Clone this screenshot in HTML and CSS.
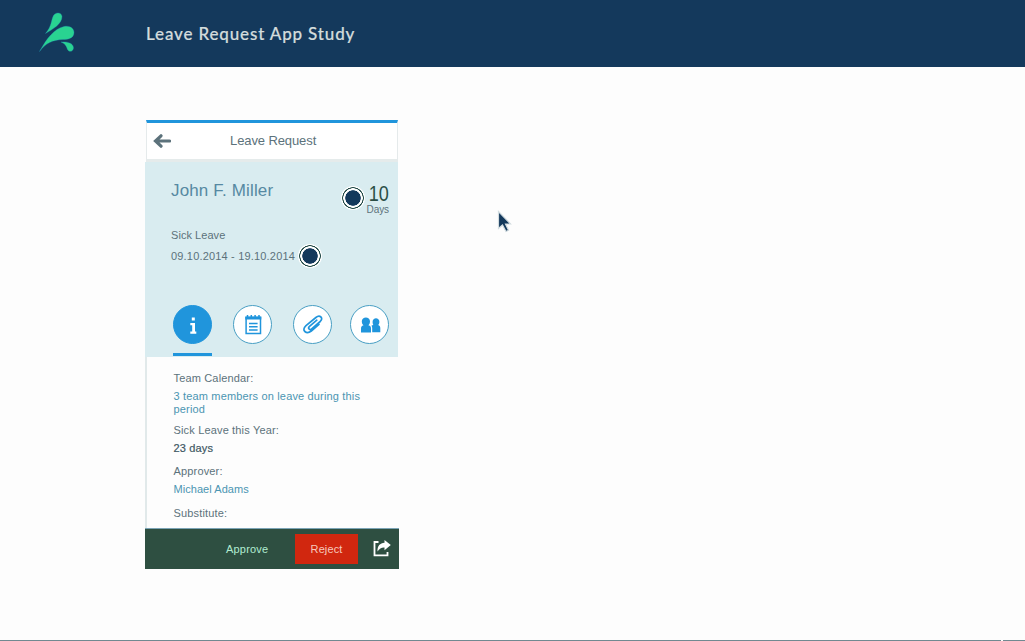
FILE: index.html
```html
<!DOCTYPE html>
<html lang="en">
<head>
<meta charset="utf-8">
<title>Leave Request App Study</title>
<link rel="stylesheet" href="styles.css">
</head>
<body>
<header class="site-header">
  <svg class="logo" width="36" height="40" viewBox="0 0 36 40">
    <path d="M6.500 21.500C13 14 12 8 14.500 3.500C16.500 0 22.500 0 23 4.500C23 12 14 17 6.500 21.500Z"/>
    <path d="M.500 39.500C8 26 15 17 25 14.500C31 13.200 35 16.500 35 20.500C34.800 26 30 27.500 24 27.500C13 28 7 31 .500 39.500Z"/>
    <path d="M22 30C27 29.500 34.500 30.500 34.500 36C34 40 29.500 40.500 28.300 37C27 33 25.500 31.500 22 30Z"/>
  </svg>
  <h1 class="site-title">Leave Request App Study</h1>
</header>
<main class="stage">
  <section class="phone">
    <div class="titlebar">
      <svg class="back" width="18" height="14" viewBox="0 0 18 14"><path d="M8 1.800L2.500 7L8 12.200M2.500 7H16.500"/></svg>
      <span class="screen-title">Leave Request</span>
    </div>
    <div class="summary">
      <div class="person">
        <h2 class="name">John F. Miller</h2>
        <i class="hotspot"></i>
        <div class="duration"><span class="count">10</span><span class="unit">Days</span></div>
      </div>
      <p class="leave-type">Sick Leave</p>
      <div class="period"><span class="dates">09.10.2014 - 19.10.2014</span><i class="hotspot"></i></div>
      <nav class="tabs">
        <a class="tab active"><svg width="38" height="38" viewBox="0 0 38 38"><path class="solid-white" d="M17.800 11.500h3v3h-3zM16.300 17h4.700v8.500h1.300v2.300h-6v-2.300h1.900v-6.200h-1.900z"/></svg></a>
        <a class="tab"><svg width="38" height="38" viewBox="0 0 38 38"><path class="solid" d="M11.300 10.500h16v3h-16z"/><path class="stroke" d="M12.100 11.500h14.400v15.900H12.100zM15 17.500h8.600M15 20.800h8.600M15 24.100h8.600"/><path class="stroke" d="M13.500 9v2M17.300 9v2M21.100 9v2M25 9v2"/></svg></a>
        <a class="tab"><svg width="38" height="38" viewBox="0 0 38 38"><path class="clip" d="M22.800 14.200L15.500 20.300C13.400 22.200 15.700 24.600 17.700 22.900L26.200 15.500C30 11.800 25.700 8.500 21.900 11.500L12 19.700C6.700 24.300 12.500 28.800 17.300 25L25 18.400"/></svg></a>
        <a class="tab"><svg width="38" height="38" viewBox="0 0 38 38"><path class="solid" d="M10.800 15.300c0-5.200 8.200-5.200 8.200 0 0 2-.6 3-1.600 4 2.200.5 2.600 1.700 2.600 3.500V26.500H10v-3.700c0-1.800.6-3 2.500-3.500-1.100-1-1.700-2-1.700-4z"/><path class="solid" d="M21.600 15.800c0-4.800 6.800-4.800 6.800 0 0 1.600-.5 2.500-1.300 3.300 1.700.5 2.200 1.600 2.200 3.200v3.900h-8.100v-3.900c0-1.200-.2-2-.8-2.600.5-.3 1.100-.5 2-.6-.5-.8-.8-1.700-.8-3.300z"/></svg></a>
      </nav>
    </div>
    <dl class="details">
      <dt class="label">Team Calendar:</dt>
      <dd class="value link team">3 team members on leave during this period</dd>
      <dt class="label">Sick Leave this Year:</dt>
      <dd class="value total">23 days</dd>
      <dt class="label">Approver:</dt>
      <dd class="value link approver">Michael Adams</dd>
      <dt class="label">Substitute:</dt>
    </dl>
    <footer class="actions">
      <span class="approve">Approve</span>
      <span class="reject">Reject</span>
      <svg class="share" width="18" height="17" viewBox="0 0 18 17"><path class="share-box" d="M5.500 2H1.500V15.300H14.500V12"/><path class="share-arrow" d="M11.500 0L17.800 5L11.500 10.300V7.500C8.500 7.300 6.500 8.500 4.500 11.500C4.300 6 7 2.800 11.500 2.700z"/></svg>
    </footer>
  </section>
  <svg class="cursor" width="16" height="24" viewBox="0 0 16 24"><path d="M1.500 1.500V18.500L5.500 15L9 21.500L11.500 20.200L8.500 14H13.500Z"/></svg>
</main>
<div class="bottom-edge"><i class="edge-gap"></i></div>
</body>
</html>
```
FILE: styles.css
```css
* { box-sizing: border-box; }
body {
  margin: 0;
  height: 641px;
  overflow: hidden;
  display: flex;
  flex-direction: column;
  background: #fdfdfd;
  font-family: "Liberation Sans", Arial, sans-serif;
  color: #5c727b;
}
h1, h2, p, dl, dd { margin: 0; font-weight: normal; }

.site-header {
  height: 67px;
  flex: none;
  display: flex;
  align-items: flex-start;
  padding-left: 39px;
  background: #14395c;
}
.logo { margin-top: 12px; fill: #29d391; stroke: #249fc4; stroke-width: .3; }
.site-title {
  margin-left: 71px;
  font: 500 17px/24px Lato, sans-serif;
  padding-top: 22px;
  letter-spacing: .85px;
  -webkit-text-stroke: .2px;
  color: #d3dcdc;
}

.stage { flex: 1; position: relative; padding: 53px 0 0 145px; }
.phone { width: 254px; height: 449px; display: flex; flex-direction: column; }

.titlebar {
  height: 42px;
  margin-left: 1px;
  width: 252px;
  display: flex;
  align-items: center;
  border: 1px solid #e5eaeb;
  border-top: 3px solid #2095dc;
  border-bottom: 3px solid #e5ebeb;
  background: #fff;
}
.back { margin-left: 6px; fill: none; stroke: #5c727b; stroke-width: 3.200; stroke-linecap: round; }
.screen-title { margin-left: 59px; padding-bottom: 2px; font-size: 13px; letter-spacing: -.1px; }

.summary { height: 195px; width: 253px; padding-left: 26px; background: #d9ecf0; }
.person { display: flex; height: 66px; }
.name { width: 170px; padding-top: 19px; font-size: 17px; line-height: 20px; letter-spacing: .15px; color: #5689a2; }
.hotspot {
  flex: none;
  width: 24px;
  height: 24px;
  border-radius: 50%;
  background: radial-gradient(circle, #14395c 0 7.400px, #fff 8px 9.500px, #234b48 9.900px 10.500px, #fff 11px);
}
.person .hotspot { margin-top: 24px; }
.duration { width: 24px; padding-top: 21px; display: flex; flex-direction: column; align-items: flex-end; }
.count { font-size: 21.500px; line-height: 22px; transform: scaleX(.84); transform-origin: right; color: #2c4f46; }
.unit { font-size: 10px; line-height: 10px; letter-spacing: -.1px; }
.leave-type { font-size: 11px; line-height: 14px; letter-spacing: .05px; }
.period { display: flex; align-items: center; height: 24px; margin-top: 2px; }
.dates { width: 127px; font-size: 11px; letter-spacing: .18px; white-space: nowrap; }
.tabs { display: flex; margin: 37px 0 0 2px; }
.tab { width: 39px; height: 39px; margin-right: 21px; border-radius: 50%; border: 1px solid #499fc4; background: #fff; }
.tab:nth-child(3) { margin-right: 18px; }
.tab:last-child { margin-right: 0; }
.tab svg { display: block; margin: -.5px; }
.tab.active { background: #2095dc; border-color: #2095dc; }
.tab.active::after { content: ""; display: block; width: 39px; height: 3px; margin: 10px 0 0 -1px; background: #2095dc; }
.solid { fill: #2095dc; }
.solid-white { fill: #fff; }
.stroke { fill: none; stroke: #2095dc; stroke-width: 1.500; }
.clip { fill: none; stroke: #2095dc; stroke-width: 1.700; stroke-linecap: round; }

.details {
  height: 171px;
  padding: 15px 0 0 26.500px;
  border-left: 2px solid #e1e9ea;
  font-size: 11px;
  line-height: 13px;
  letter-spacing: .16px;
}
.label { height: 13px; }
.value { color: #3e5763; }
.link { color: #4b95b2; }
.team { width: 200px; margin: 5px 0 8px; }
.total { margin: 5px 0 10px; -webkit-text-stroke: .2px; }
.approver { margin: 5px 0 11px; letter-spacing: .05px; }

.actions {
  height: 41px;
  display: flex;
  align-items: center;
  border-top: 1px solid #7ba4b6;
  background: #2e4f41;
  font-size: 11px;
}
.approve { width: 69px; margin-left: 81px; letter-spacing: .2px; color: #b1ecd1; }
.reject { width: 63px; line-height: 30px; text-align: center; letter-spacing: .1px; background: #d1270f; color: #f6c9bd; }
.share { margin: 0 0 1px 15px; }
.share-box { fill: none; stroke: #fff; stroke-width: 1.800; }
.share-arrow { fill: #fff; }

.cursor { position: absolute; left: 497px; top: 143px; }
.cursor path { fill: #14395c; stroke: #d3dde1; stroke-width: 1.200; }
.bottom-edge { flex: none; height: 1px; background: #718991; }
.edge-gap { display: block; width: 2px; height: 1px; margin-left: 1001px; background: #fff; }
```
